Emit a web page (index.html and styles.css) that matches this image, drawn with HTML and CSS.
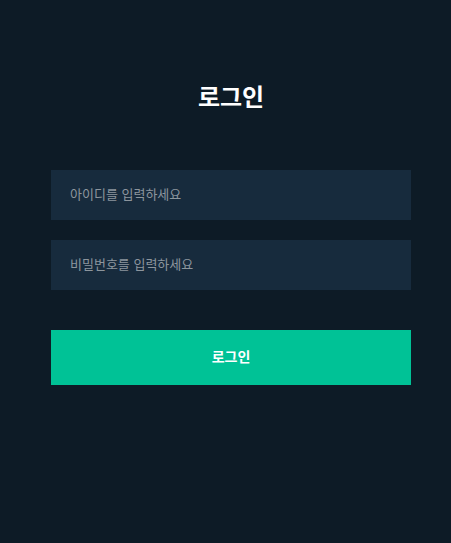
FILE: index.html
```html
<!DOCTYPE html>
<html lang="ko">
<head>
<meta charset="utf-8">
<link rel="stylesheet" href="styles.css">
</head>
<body>
<main class="login">
  <h1 class="login-title">로그인</h1>
  <form class="login-form">
    <input class="login-input" type="text" placeholder="아이디를 입력하세요">
    <input class="login-input" type="password" placeholder="비밀번호를 입력하세요">
    <button class="login-button" type="button">로그인</button>
  </form>
</main>
</body>
</html>
```
FILE: styles.css
```css
html, body {
  margin: 0;
  padding: 0;
  background: #0d1b26;
  height: 100%;
}
body {
  font-family: "Noto Sans CJK KR", "Noto Sans", sans-serif;
}
.login {
  width: 360px;
  margin-left: 51px;
  padding-top: 79px;
  display: flex;
  flex-direction: column;
}
.login-title {
  margin: 0;
  font-size: 24px;
  line-height: 34px;
  font-weight: 700;
  color: #ffffff;
  text-align: center;
}
.login-form {
  margin-top: 57px;
  display: flex;
  flex-direction: column;
  gap: 20px;
}
.login-input {
  box-sizing: border-box;
  height: 50px;
  width: 100%;
  border: none;
  outline: none;
  background: #172b3d;
  padding: 0 19px 4px;
  font-family: inherit;
  font-size: 13px;
  color: #c9d2da;
}
.login-input::placeholder {
  color: #8c959d;
}
.login-button {
  margin-top: 20px;
  height: 55px;
  border: none;
  background: #00c296;
  color: #ffffff;
  font-family: inherit;
  font-size: 14px;
  font-weight: 700;
  padding: 0 0 3px;
}
```
